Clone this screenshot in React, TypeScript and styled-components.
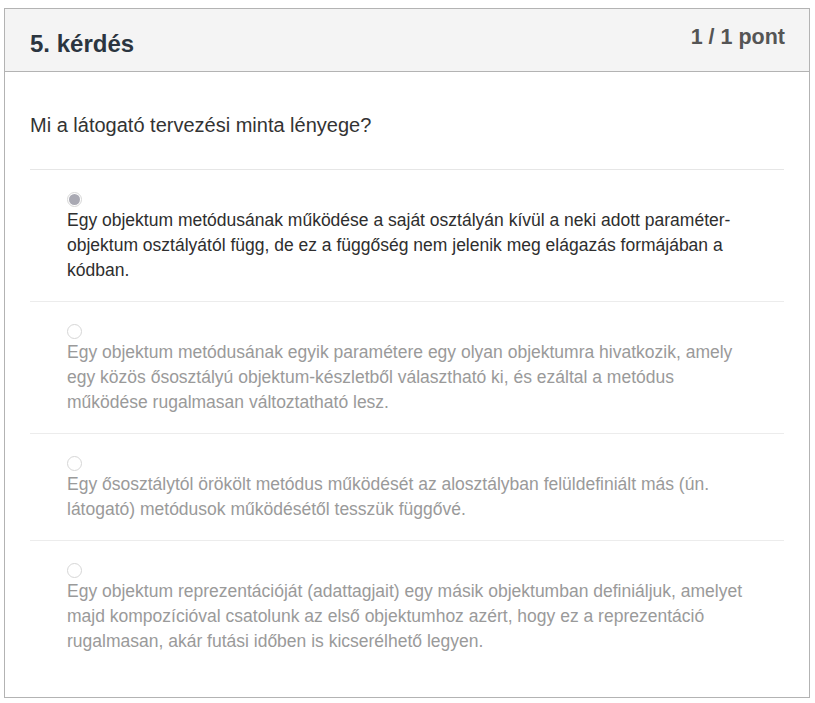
import React from "react";
import styled, { createGlobalStyle } from "styled-components";

const GlobalStyle = createGlobalStyle`
  html, body { background: #ffffff; }
  body {
    margin: 8px 5px 0 4px;
    font-family: "Liberation Sans", Arial, sans-serif;
    color: #333333;
  }
  * { box-sizing: border-box; }
`;

const Card = styled.section`
  width: 806px;
  border: 1px solid #b3b3b3;
  background: #ffffff;
`;

const Header = styled.header`
  height: 63px;
  background: #f4f4f4;
  border-bottom: 1px solid #b3b3b3;
  display: flex;
  justify-content: space-between;
  align-items: flex-start;
  padding: 0 24px 0 25px;
`;

const Title = styled.h2`
  margin: 0;
  padding-top: 21px;
  font-size: 24px;
  line-height: 28px;
  font-weight: 700;
  color: #2b3540;
`;

const Score = styled.div`
  padding-top: 16px;
  font-size: 21.5px;
  line-height: 25px;
  font-weight: 700;
  color: #555555;
`;

const Body = styled.div`
  padding: 41px 25px 25px;
`;

const Question = styled.p`
  margin: 0;
  font-size: 20px;
  line-height: 25px;
  color: #333333;
  padding-bottom: 31px;
  border-bottom: 1px solid #e6e6e6;
`;

const OptionList = styled.div`
  display: flex;
  flex-direction: column;
`;

const Option = styled.label<{ $last?: boolean }>`
  display: flex;
  flex-direction: column;
  align-items: flex-start;
  padding: 22px 25px 18px 37px;
  border-bottom: ${(p) => (p.$last ? "none" : "1px solid #ececec")};
`;

const Radio = styled.span<{ $checked?: boolean }>`
  width: 15px;
  height: 15px;
  border-radius: 50%;
  border: 1px solid #d6d6d6;
  background: #ffffff;
  display: flex;
  align-items: center;
  justify-content: center;
  margin-bottom: 1px;
  &::after {
    content: "";
    width: 11px;
    height: 11px;
    border-radius: 50%;
    background: ${(p) => (p.$checked ? "#a9a9b3" : "transparent")};
  }
`;

const OptionText = styled.span<{ $checked?: boolean }>`
  font-size: 17.5px;
  line-height: 25px;
  color: ${(p) => (p.$checked ? "#2e2e2e" : "#9a9a9a")};
`;

const options = [
  {
    text: "Egy objektum metódusának működése a saját osztályán kívül a neki adott paraméter-objektum osztályától függ, de ez a függőség nem jelenik meg elágazás formájában a kódban.",
    checked: true,
  },
  {
    text: "Egy objektum metódusának egyik paramétere egy olyan objektumra hivatkozik, amely egy közös ősosztályú objektum-készletből választható ki, és ezáltal a metódus működése rugalmasan változtatható lesz.",
    checked: false,
  },
  {
    text: "Egy ősosztálytól örökölt metódus működését az alosztályban felüldefiniált más (ún. látogató) metódusok működésétől tesszük függővé.",
    checked: false,
  },
  {
    text: "Egy objektum reprezentációját (adattagjait) egy másik objektumban definiáljuk, amelyet majd kompozícióval csatolunk az első objektumhoz azért, hogy ez a reprezentáció rugalmasan, akár futási időben is kicserélhető legyen.",
    checked: false,
  },
];

export default function App() {
  return (
    <>
      <GlobalStyle />
      <Card>
        <Header>
          <Title>5. kérdés</Title>
          <Score>1 / 1 pont</Score>
        </Header>
        <Body>
          <Question>Mi a látogató tervezési minta lényege?</Question>
          <OptionList>
            {options.map((o, i) => (
              <Option key={i} $last={i === options.length - 1}>
                <Radio $checked={o.checked} />
                <OptionText $checked={o.checked}>{o.text}</OptionText>
              </Option>
            ))}
          </OptionList>
        </Body>
      </Card>
    </>
  );
}
